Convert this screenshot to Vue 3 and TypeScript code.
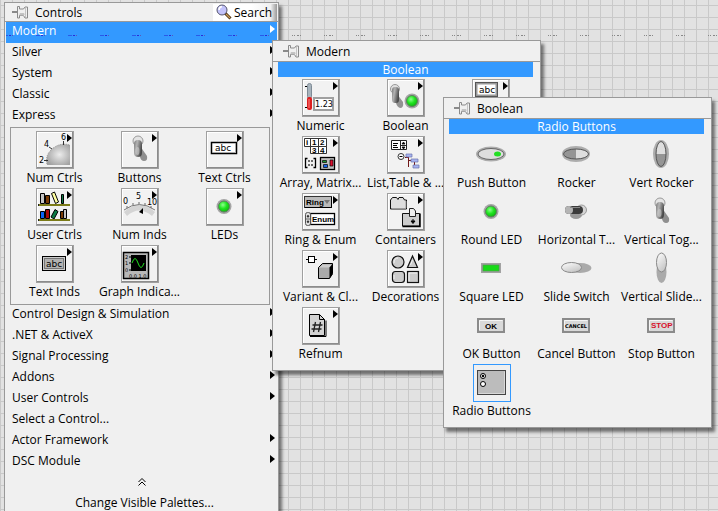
<script setup lang="ts">
import { ref } from 'vue'

interface Item {
  label: string
  icon: string
}
interface Category {
  label: string
  submenu: boolean
}
interface Glyph {
  x: number
  y: number
  text: string
  kind: string
}

const upper: Category[] = ['Modern', 'Silver', 'System', 'Classic', 'Express'].map((label) => ({ label, submenu: true }))

const lower: Category[] = [
  { label: 'Control Design & Simulation', submenu: true },
  { label: '.NET & ActiveX', submenu: true },
  { label: 'Signal Processing', submenu: true },
  { label: 'Addons', submenu: true },
  { label: 'User Controls', submenu: true },
  { label: 'Select a Control...', submenu: false },
  { label: 'Actor Framework', submenu: true },
  { label: 'DSC Module', submenu: true },
]

const express: Item[] = [
  { label: 'Num Ctrls', icon: 'knob' },
  { label: 'Buttons', icon: 'toggle' },
  { label: 'Text Ctrls', icon: 'text-ctrl' },
  { label: 'User Ctrls', icon: 'books' },
  { label: 'Num Inds', icon: 'meter' },
  { label: 'LEDs', icon: 'led' },
  { label: 'Text Inds', icon: 'text-ind' },
  { label: 'Graph Indica...', icon: 'graph' },
]

// Rows of the Modern palette; the last column is filled only in the first row.
const modern: Item[][] = [
  [
    { label: 'Numeric', icon: 'numeric' },
    { label: 'Boolean', icon: 'boolean' },
    { label: '', icon: 'string' },
  ],
  [
    { label: 'Array, Matrix...', icon: 'array' },
    { label: 'List,Table & ...', icon: 'list' },
  ],
  [
    { label: 'Ring & Enum', icon: 'ring' },
    { label: 'Containers', icon: 'containers' },
  ],
  [
    { label: 'Variant & Cl...', icon: 'variant' },
    { label: 'Decorations', icon: 'decorations' },
  ],
  [{ label: 'Refnum', icon: 'refnum' }],
]

const booleans: Item[] = [
  { label: 'Push Button', icon: 'push' },
  { label: 'Rocker', icon: 'rocker' },
  { label: 'Vert Rocker', icon: 'vert-rocker' },
  { label: 'Round LED', icon: 'led' },
  { label: 'Horizontal T...', icon: 'h-toggle' },
  { label: 'Vertical Tog...', icon: 'toggle' },
  { label: 'Square LED', icon: 'square-led' },
  { label: 'Slide Switch', icon: 'slide' },
  { label: 'Vertical Slide...', icon: 'v-slide' },
  { label: 'OK Button', icon: 'ok' },
  { label: 'Cancel Button', icon: 'cancel' },
  { label: 'Stop Button', icon: 'stop' },
  { label: 'Radio Buttons', icon: 'radio' },
]

// Lettering drawn on top of an icon's shape.
const glyphs: Record<string, Glyph[]> = {
  knob: [
    { x: 3, y: 32, text: '2', kind: 'px' },
    { x: 8, y: 16, text: '4', kind: 'px' },
    { x: 25, y: 9, text: '6', kind: 'px' },
  ],
  'text-ctrl': [{ x: 9, y: 20, text: 'abc', kind: 'wide' }],
  'text-ind': [{ x: 10, y: 22, text: 'abc', kind: 'wide' }],
  meter: [
    { x: 2, y: 16, text: '0', kind: 'px' },
    { x: 15, y: 11, text: '5', kind: 'px' },
    { x: 26, y: 17, text: '10', kind: 'px' },
  ],
  graph: [
    { x: 4, y: 14, text: '2', kind: 'tiny' },
    { x: 4, y: 20, text: '1', kind: 'tiny' },
    { x: 4, y: 27, text: '0', kind: 'tiny' },
    { x: 8, y: 33, text: '0.0 1.0', kind: 'tiny' },
  ],
  numeric: [{ x: 13, y: 28, text: '1.23', kind: 'px' }],
  string: [{ x: 7, y: 14, text: 'abc', kind: 'wide' }],
  array: [
    { x: 4, y: 9, text: 'i', kind: 'bold' },
    { x: 10, y: 9, text: '1', kind: 'bold' },
    { x: 18, y: 9, text: '2', kind: 'bold' },
    { x: 10, y: 17, text: '3', kind: 'bold' },
    { x: 18, y: 17, text: '4', kind: 'bold' },
  ],
  ring: [
    { x: 4, y: 12, text: 'Ring', kind: 'bold' },
    { x: 10, y: 29, text: 'Enum', kind: 'bold' },
  ],
  ok: [{ x: 12, y: 22, text: 'OK', kind: 'bold' }],
  cancel: [{ x: 7, y: 21, text: 'CANCEL', kind: 'cap' }],
  stop: [{ x: 8, y: 21, text: 'STOP', kind: 'bold red' }],
}

const openCategory = ref('Modern')
const selected = ref('Radio Buttons')
</script>

<template>
  <main class="desktop">
    <svg class="defs" width="0" height="0" aria-hidden="true">
      <defs>
        <radialGradient id="g-green" cx="0.4" cy="0.35" r="0.7">
          <stop offset="0" stop-color="#8dff8d" />
          <stop offset="0.5" stop-color="#1fe51f" />
          <stop offset="1" stop-color="#0fae0f" />
        </radialGradient>
        <radialGradient id="g-knob" cx="0.55" cy="0.5" r="0.6">
          <stop offset="0" stop-color="#ececec" />
          <stop offset="1" stop-color="#a2a2a2" />
        </radialGradient>
        <linearGradient id="g-stem" x1="0" x2="1" y1="0" y2="0.4">
          <stop offset="0" stop-color="#777" />
          <stop offset="0.4" stop-color="#b4b4b4" />
          <stop offset="1" stop-color="#4a4a4a" />
        </linearGradient>
        <linearGradient id="g-pale" x1="0" x2="0.6" y1="0" y2="1">
          <stop offset="0" stop-color="#fff" />
          <stop offset="1" stop-color="#c6c6c6" />
        </linearGradient>
      </defs>

      <symbol id="i-pin" viewBox="0 0 16 14">
        <path d="M0 7h6" stroke="#8a8a8a" stroke-width="2" fill="none" />
        <path d="M5.5 1.500h2v2.500h4l1.500-2h2.500v11h-2.500l-1.500-2.500h-4v2.500h-2z" fill="#f0f0f0" stroke="#8a8a8a" />
        <path d="M8 8.500h4v1.500h-4zM13.500 3v9" fill="#bbb" stroke="#c4c4c4" />
      </symbol>
      <symbol id="i-search" viewBox="0 0 16 16">
        <path d="M9 9l5.500 5.500" stroke="#4a2f12" stroke-width="3" />
        <path d="M10 10l4 4" stroke="#c99a56" stroke-width="1.300" />
        <circle cx="6" cy="6" r="5" fill="#c3c3fb" stroke="#54546a" />
        <path d="M3 6q0-3 3-3.500" stroke="#fff" stroke-width="1.500" fill="none" />
      </symbol>
      <symbol id="i-knob" viewBox="0 0 38 38">
        <path d="M34 14v20H11q-2-9 4-15q8-8 19-5z" fill="url(#g-knob)" />
        <path d="M11 33q-2-8 4-14q8-8 19-5" fill="none" stroke="#8d8d8d" stroke-dasharray="1 1" />
        <path d="M8 29.500h4M13 16l3 2M27.500 10v4" stroke="#333" />
      </symbol>
      <symbol id="i-toggle" viewBox="0 0 38 38">
        <path d="M19 15l7 10q1 5-3 5q-3 0-4-4z" fill="#8f8f8f" />
        <circle cx="17" cy="10" r="5" fill="#e4e4e4" stroke="#9a9a9a" />
        <rect x="13" y="9" width="8" height="17" rx="4" fill="url(#g-stem)" />
        <ellipse cx="16.500" cy="20" rx="2" ry="4" fill="#cfcfcf" opacity=".6" />
      </symbol>
      <symbol id="i-text-ctrl" viewBox="0 0 38 38">
        <rect x="5.500" y="11.500" width="25" height="11" fill="#fff" stroke="#000" stroke-width="1.500" />
        <path d="M7 21.500h22M29.500 13v9" stroke="#aaa" />
      </symbol>
      <symbol id="i-text-ind" viewBox="0 0 38 38">
        <rect x="6.500" y="11.500" width="23" height="14" fill="#ccc" stroke="#000" />
        <rect x="8.500" y="13.500" width="19" height="10" fill="#b2b2b2" stroke="#777" />
      </symbol>
      <symbol id="i-books" viewBox="0 0 38 38">
        <g stroke="#000">
          <path d="M4.500 5.500h4v10h-4z" fill="#c4c4c4" />
          <path d="M9.500 7.500h4v8h-4z" fill="#7a3c05" />
          <path d="M15.500 5.500l3-1.500 4 10-3 1.500z" fill="#ffffa0" />
          <path d="M25.500 6.500h2v9h-2z" fill="#0c7a44" />
          <path d="M4.500 23.500h4v7h-4z" fill="#0a62f5" />
          <path d="M9.500 21.500h4v9h-4z" fill="#a80808" />
          <path d="M19 21.500l3 2-4 7.500-3-2z" fill="#0c7a44" />
          <path d="M24.500 23.500h3v7h-3z" fill="#7a3c05" />
          <path d="M27.500 21.500h3v9h-3z" fill="#c4c4c4" />
        </g>
        <path d="M2 16h32v2H2zM2 31h32v2H2z" fill="#222" />
        <path d="M3 17h31M3 32h31" stroke="#9a9a16" stroke-width="1.500" />
      </symbol>
      <symbol id="i-meter" viewBox="0 0 38 38">
        <path d="M3 24Q18 10 34 24L31 28Q18 17 6 28z" fill="#d4d4d4" />
        <path d="M3 22Q18 11 34 22" fill="none" stroke="#777" />
        <path d="M6 18v2M12 15v2M18 14v2M24 15v2M30 18v2" stroke="#666" />
        <path d="M22 20v6l-4-2z" fill="#000" />
      </symbol>
      <symbol id="i-led" viewBox="0 0 38 38">
        <circle cx="18" cy="18.500" r="7.500" fill="#a4a4a4" />
        <circle cx="18" cy="18.500" r="5.500" fill="url(#g-green)" stroke="#5f7f5f" />
      </symbol>
      <symbol id="i-graph" viewBox="0 0 38 38">
        <rect x="2.500" y="7.500" width="25" height="26" fill="#b8b8b8" stroke="#000" stroke-width="1.500" />
        <rect x="10" y="10" width="15" height="16" fill="#000" />
        <path d="M11 18q3-9 6 0t6 0" fill="none" stroke="#20e020" />
        <path d="M8 12h2M8 18h2M8 25h2" stroke="#000" />
      </symbol>
      <symbol id="i-numeric" viewBox="0 0 38 38">
        <path d="M3 7.500h3M3 28.500h3" stroke="#000" />
        <rect x="5.500" y="4.500" width="4" height="15" rx="2" fill="#a8b4bd" stroke="#7f8b96" />
        <rect x="5" y="18" width="5" height="13" rx="2" fill="#dc2020" />
        <path d="M7 20v9" stroke="#ff8585" />
        <rect x="12" y="19" width="19" height="12" fill="#fff" stroke="#a0a0a0" stroke-width="2" />
      </symbol>
      <symbol id="i-boolean" viewBox="0 0 38 38">
        <path d="M10 15l6 8q1 6-3 6q-3-1-4-5z" fill="#929292" />
        <circle cx="8" cy="10" r="4.500" fill="#e1e1e1" stroke="#999" />
        <rect x="5" y="8" width="7" height="16" rx="3" fill="url(#g-stem)" />
        <circle cx="25" cy="22" r="7.500" fill="#a4a4a4" />
        <circle cx="25" cy="22" r="5.500" fill="url(#g-green)" stroke="#5f7f5f" />
      </symbol>
      <symbol id="i-string" viewBox="0 0 38 38">
        <rect x="4.500" y="4.500" width="20" height="12" fill="#fff" stroke="#999" stroke-width="2" />
        <rect x="3.500" y="3.500" width="22" height="14" fill="none" stroke="#555" />
      </symbol>
      <symbol id="i-array" viewBox="0 0 38 38">
        <path d="M2.500 2.500h22v8h-22zM8.500 10.500h16v7h-16zM8.500 2.500v8M16.500 2.500v15" fill="#fff" stroke="#333" />
        <path d="M5.500 22.500h-2v9h2M11.500 22.500h2v9h-2" fill="none" stroke="#000" stroke-width="1.300" />
        <path d="M6 24l2 2m0-2l-2 2m3-2l2 2m0-2l-2 2M6 28l2 2m0-2l-2 2m3-2l2 2m0-2l-2 2" stroke="#333" stroke-width=".7" />
        <rect x="18.500" y="21.500" width="14" height="12" fill="#c0c0c0" stroke="#000" stroke-width="1.300" />
        <path d="M20.500 24.500h4v2h-4z" fill="#1c9632" stroke="#000" stroke-width=".7" />
        <path d="M28 24h3v6h-3z" fill="#e01030" stroke="#000" stroke-width=".7" />
        <path d="M21.500 28.500h4v3h-4z" fill="#1664e8" stroke="#000" stroke-width=".7" />
      </symbol>
      <symbol id="i-list" viewBox="0 0 38 38">
        <path d="M4.500 4.500h15v9h-15zM13.500 4.500v9M13.500 9.500h6" fill="#fff" stroke="#222" />
        <path d="M6 7.500h5M6 9.500h4M6 11.500h5" stroke="#000" />
        <path d="M15 8l1.500-2 1.500 2zM15 11l1.500 2 1.500-2z" stroke="#000" stroke-width=".8" />
        <circle cx="14" cy="20.500" r="3" fill="#fff" stroke="#333" />
        <path d="M12.500 20.500h3" stroke="#000" />
        <path d="M18 21.500h4M21.500 22v9M21.500 24.500h4M27.500 26v5" fill="none" stroke="#701818" />
        <path d="M19 18h6v3h-6zM24 23h7v3h-7zM26 29h6v3h-6z" fill="#a7b3ef" stroke="#6a72ad" stroke-width=".7" />
      </symbol>
      <symbol id="i-ring" viewBox="0 0 38 38">
        <rect x="2.500" y="3.500" width="27" height="11" fill="#bbb" stroke="#333" />
        <path d="M3 14.500h26.500V4" fill="none" stroke="#000" />
        <path d="M22 7h6l-3 4z" fill="#777" />
        <rect x="8.500" y="20.500" width="24" height="11" fill="#fff" stroke="#000" stroke-width="1.300" />
        <rect x="3.500" y="19.500" width="5" height="13" rx="2" fill="#ddd" stroke="#555" />
        <path d="M4 26h4M5 24l1-2 1 2zM5 28l1 2 1-2z" stroke="#333" stroke-width=".7" />
      </symbol>
      <symbol id="i-containers" viewBox="0 0 38 38">
        <path d="M3.500 7l2-2.500h4l1.500 2 1-2h4l1.500 2.500h2v9h-16z" fill="#ddd" stroke="#111" />
        <path d="M5 15.500h14M19 8v7" stroke="#999" />
        <path d="M15.500 20.500h17v12.500h-17z" fill="#cdcdcd" stroke="#111" />
        <path d="M15.500 33.500h17.500v-13" stroke="#000" stroke-width="1.500" fill="none" />
        <path d="M22.500 23.500v-8h4l2 2.500v5.500z" fill="#eee" stroke="#222" />
        <path d="M24 28h4l-2 2.500zM26 26v3" fill="#000" stroke="#000" />
      </symbol>
      <symbol id="i-variant" viewBox="0 0 38 38">
        <path d="M4 9.500h11" stroke="#000" />
        <rect x="6.500" y="6.500" width="6" height="6" fill="#fff" stroke="#000" />
        <path d="M16.500 17.500l4-4h10v10l-3 5h-11z" fill="#aaa" stroke="#000" />
        <path d="M27.500 17.500l3-4v11l-3 4z" fill="#000" />
        <path d="M17 17.500h10l3-3h-9z" fill="#ccc" />
      </symbol>
      <symbol id="i-decorations" viewBox="0 0 38 38">
        <g fill="#ccc" stroke="#111" stroke-width="1.200">
          <circle cx="11" cy="12" r="6" />
          <path d="M25.500 6l5 11.500h-10z" />
          <rect x="5.500" y="21.500" width="12" height="11" rx="3" />
          <rect x="20.500" y="21.500" width="11" height="11" />
        </g>
        <path d="M7 13q0-5 4-5M23.500 15l2-5M7 25v4M22 31v-8h8" stroke="#f4f4f4" fill="none" />
      </symbol>
      <symbol id="i-refnum" viewBox="0 0 38 38">
        <path d="M7.500 7.500h10l5 5v16h-15z" fill="#d3d3d3" stroke="#000" />
        <path d="M8 29.500h16v-16M17.500 7.500v5h5" fill="none" stroke="#000" />
        <path d="M13.500 15l-2 10M18.500 15l-2 10M10.500 18h10M9.500 22h10" stroke="#222" stroke-width="1.300" />
      </symbol>
      <symbol id="i-push" viewBox="0 0 38 38">
        <ellipse cx="18" cy="18" rx="15" ry="7.500" fill="#acacac" />
        <ellipse cx="18" cy="18" rx="13" ry="5.500" fill="#dedede" stroke="#666" />
        <ellipse cx="24.500" cy="18" rx="3.500" ry="2.500" fill="#24df24" />
      </symbol>
      <symbol id="i-rocker" viewBox="0 0 38 38">
        <ellipse cx="18" cy="18" rx="14" ry="8" fill="#adadad" />
        <ellipse cx="18" cy="18" rx="12.500" ry="5" fill="#dedede" />
        <path d="M18 13v10q-12 0-12.500-5 .5-5 12.500-5" fill="#959595" />
        <ellipse cx="18" cy="18" rx="12.500" ry="5" fill="none" stroke="#555" />
      </symbol>
      <symbol id="i-vert-rocker" viewBox="0 0 38 38">
        <ellipse cx="18" cy="18" rx="8" ry="14" fill="#adadad" />
        <ellipse cx="18" cy="18" rx="5" ry="12.500" fill="#dedede" />
        <path d="M13 18h10q0 12-5 12.500-5-.5-5-12.500" fill="#959595" />
        <ellipse cx="18" cy="18" rx="5" ry="12.500" fill="none" stroke="#555" />
      </symbol>
      <symbol id="i-h-toggle" viewBox="0 0 38 38">
        <ellipse cx="18" cy="22" rx="6" ry="4" fill="#999" />
        <circle cx="23.500" cy="17" r="5" fill="#d5d5d5" stroke="#999" />
        <rect x="7" y="13" width="18" height="8" rx="4" fill="#3b3b3b" />
        <ellipse cx="11" cy="17" rx="4" ry="4" fill="#b5b5b5" />
        <path d="M12 14.500h10" stroke="#888" />
      </symbol>
      <symbol id="i-square-led" viewBox="0 0 38 38">
        <rect x="8" y="13" width="20" height="10" fill="#a2a2a2" />
        <rect x="10" y="15" width="16" height="6" fill="#18db18" stroke="#4d9a4d" stroke-width=".7" />
      </symbol>
      <symbol id="i-slide" viewBox="0 0 38 38">
        <ellipse cx="22" cy="18" rx="11.500" ry="5" fill="#aaa" />
        <ellipse cx="13.500" cy="17.500" rx="10" ry="5" fill="url(#g-pale)" stroke="#888" />
      </symbol>
      <symbol id="i-v-slide" viewBox="0 0 38 38">
        <ellipse cx="18.500" cy="22" rx="5" ry="11" fill="#aaa" />
        <ellipse cx="18.500" cy="12.500" rx="5" ry="9.500" fill="url(#g-pale)" stroke="#888" />
      </symbol>
      <symbol id="i-plate" viewBox="0 0 38 38">
        <rect x="5" y="12" width="26" height="13" fill="#d9d9d9" stroke="#8b8b8b" stroke-width="2" />
        <path d="M6.500 23v-9.500h23" fill="none" stroke="#f5f5f5" />
      </symbol>
      <symbol id="i-ok" viewBox="0 0 38 38"><use href="#i-plate" width="38" height="38" /></symbol>
      <symbol id="i-cancel" viewBox="0 0 38 38"><use href="#i-plate" width="38" height="38" /></symbol>
      <symbol id="i-stop" viewBox="0 0 38 38"><use href="#i-plate" width="38" height="38" /></symbol>
      <symbol id="i-radio" viewBox="0 0 38 38">
        <rect x="4.500" y="6.500" width="28" height="24" fill="#bcbcbc" stroke="#444" />
        <path d="M5.500 29.500h26v-22" stroke="#d8d8d8" fill="none" />
        <circle cx="10" cy="12" r="2.500" fill="#fff" stroke="#000" />
        <circle cx="10" cy="12" r="1.200" />
        <circle cx="10" cy="20" r="2.500" fill="#fff" stroke="#000" />
      </symbol>
    </svg>

    <nav class="panel root" aria-label="Controls">
      <header class="head">
        <button class="pin" type="button"><svg><use href="#i-pin" /></svg></button>
        <h1>Controls</h1>
        <button class="search" type="button"><svg><use href="#i-search" /></svg>Search</button>
      </header>
      <button
        v-for="c in upper"
        :key="c.label"
        type="button"
        class="row"
        :class="{ open: c.label === openCategory, sub: c.submenu }"
        @click="openCategory = c.label"
      >{{ c.label }}</button>
      <div class="grid framed">
        <button v-for="i in express" :key="i.label" type="button" class="cell">
          <span class="tile raised">
            <svg>
              <use :href="'#i-' + i.icon" />
              <text v-for="(g, k) in glyphs[i.icon]" :key="k" :x="g.x" :y="g.y" :class="g.kind">{{ g.text }}</text>
            </svg>
          </span>
          <span class="name">{{ i.label }}</span>
        </button>
      </div>
      <button
        v-for="c in lower"
        :key="c.label"
        type="button"
        class="row"
        :class="{ open: c.label === openCategory, sub: c.submenu }"
        @click="openCategory = c.label"
      >{{ c.label }}</button>
      <button type="button" class="collapse">
        <svg viewBox="0 0 8 8"><path d="M.5 4L4 .5 7.500 4M.5 7.500L4 4l3.500 3.500" fill="none" stroke="#000" /></svg>
      </button>
      <button type="button" class="change">Change Visible Palettes...</button>
    </nav>

    <section class="panel modern" aria-label="Modern">
      <header class="head">
        <button class="pin" type="button"><svg><use href="#i-pin" /></svg></button>
        <h2>Modern</h2>
      </header>
      <div class="title">Boolean</div>
      <div v-for="(row, n) in modern" :key="n" class="grid">
        <button v-for="i in row" :key="i.icon" type="button" class="cell">
          <span class="tile raised">
            <svg>
              <use :href="'#i-' + i.icon" />
              <text v-for="(g, k) in glyphs[i.icon]" :key="k" :x="g.x" :y="g.y" :class="g.kind">{{ g.text }}</text>
            </svg>
          </span>
          <span class="name">{{ i.label }}</span>
        </button>
      </div>
    </section>

    <section class="panel boolean" aria-label="Boolean">
      <header class="head">
        <button class="pin" type="button"><svg><use href="#i-pin" /></svg></button>
        <h2>Boolean</h2>
      </header>
      <div class="title">{{ selected }}</div>
      <div class="grid">
        <button v-for="i in booleans" :key="i.label" type="button" class="cell" @click="selected = i.label">
          <span class="tile" :class="{ selected: i.label === selected }">
            <svg>
              <use :href="'#i-' + i.icon" />
              <text v-for="(g, k) in glyphs[i.icon]" :key="k" :x="g.x" :y="g.y" :class="g.kind">{{ g.text }}</text>
            </svg>
          </span>
          <span class="name">{{ i.label }}</span>
        </button>
      </div>
    </section>
  </main>
</template>

<style>
body {
  margin: 0;
}
</style>

<style scoped>
.desktop {
  position: relative;
  box-sizing: border-box;
  height: 100vh;
  padding: 2px 4px 0;
  overflow: hidden;
  background-color: #e2e2e2;
  background-image:
    repeating-linear-gradient(90deg, transparent 0 4px, #888 4px 5px, transparent 5px 6px, #888 6px 7px, transparent 7px 9px, #888 9px 11px, transparent 11px 12px, #888 12px 13px, transparent 13px 32px),
    linear-gradient(90deg, #c9c9c9 1px, transparent 1px),
    linear-gradient(#c9c9c9 1px, transparent 1px);
  background-size: 100% 1px, 12px 12px, 12px 12px;
  background-position: 0 35px, 0 5px, 0 5px;
  background-repeat: no-repeat, repeat, repeat;
  font: 12px/17px "Open Sans", "Noto Sans", sans-serif;
  color: #000;
}
.defs {
  position: absolute;
}
button {
  margin: 0;
  padding: 0;
  border: 0;
  background: none;
  font: inherit;
  color: inherit;
}
.panel {
  box-sizing: border-box;
  border: 1px solid #999;
  background: #f0f0f0;
  box-shadow: 3px 4px 3px rgba(0, 0, 0, 0.5);
}
.root {
  width: 275px;
  min-height: 100%;
}
.modern,
.boolean {
  position: absolute;
  width: 269px;
  padding-bottom: 6px;
}
.modern {
  left: 272px;
  top: 40px;
}
.boolean {
  left: 443px;
  top: 97px;
}
.head {
  display: flex;
  align-items: center;
  box-sizing: border-box;
  height: 21px;
  padding-left: 10px;
  gap: 7px;
  border-bottom: 1px solid #999;
}
.root .head {
  height: 19px;
  padding-left: 7px;
}
h1,
h2 {
  margin: 0;
  font-size: 12px;
  font-weight: 400;
}
.pin,
.pin svg {
  display: block;
  width: 16px;
  height: 14px;
}
.search {
  display: flex;
  align-items: center;
  gap: 2px;
  height: 17px;
  margin-left: auto;
  margin-right: 1px;
  padding: 0 5px 0 3px;
  background: linear-gradient(90deg, #fff 60%, #f0f0f0 90%, #999);
}
.search svg {
  width: 16px;
  height: 16px;
}
.row {
  position: relative;
  display: block;
  width: calc(100% - 2px);
  height: 21px;
  margin-left: 1px;
  padding: 0 0 4px 6px;
  text-align: left;
}
.open {
  background: #3399ff;
  color: #fff;
}
.open::before {
  content: "";
  position: absolute;
  left: 0;
  right: 0;
  bottom: 7px;
  height: 1px;
  background: repeating-linear-gradient(90deg, #2a5ae8 0 2px, transparent 2px 3px, #2a2ad8 3px 5px, transparent 5px 6px, #5a5ab8 6px 7px, transparent 7px 30px, #2a5ae8 30px 32px);
}
.sub::after,
.raised::after {
  content: "";
  position: absolute;
  border: 4px solid transparent;
  border-left: 5px solid #000;
  border-right: 0;
}
.sub::after {
  right: 2px;
  top: 3px;
}
.open::after {
  border-left-color: #fff;
}
.raised::after {
  right: 1px;
  top: 2px;
}
.grid {
  display: grid;
  grid-template-columns: repeat(3, 85px);
  grid-auto-rows: 57px;
  margin-left: 5px;
}
.framed {
  box-sizing: border-box;
  width: 260px;
  height: 178px;
  padding: 3px 1px;
  border: 1px solid #999;
}
.cell {
  display: flex;
  flex-direction: column;
  align-items: center;
}
.tile {
  position: relative;
  box-sizing: border-box;
  width: 38px;
  height: 38px;
}
.raised {
  border: 1px solid #a0a0a0;
  box-shadow: inset -1px -1px #8c8c8c, inset 1px 1px #fff;
  background: #f2f2f2;
}
.selected {
  border: 1px solid #3399ff;
}
.tile svg {
  display: block;
  width: 38px;
  height: 38px;
}
.raised svg,
.selected svg {
  margin: -1px;
}
.name {
  height: 19px;
  line-height: 18px;
  white-space: nowrap;
}
.title {
  height: 15px;
  margin: 0 7px 2px 5px;
  background: #3399ff;
  color: #fff;
  line-height: 15px;
  text-align: center;
}
.collapse {
  display: block;
  margin: 5px auto 8px;
}
.collapse svg {
  display: block;
  width: 8px;
  height: 8px;
}
.change {
  display: block;
  margin: 0 auto;
  padding-left: 6px;
}
.px {
  font: 8px "DejaVu Sans", sans-serif;
}
.wide {
  font: 9px "DejaVu Sans", sans-serif;
}
.tiny {
  font: 5px "DejaVu Sans", sans-serif;
}
.bold {
  font: bold 8px "Liberation Sans", sans-serif;
}
.cap {
  font: bold 6px "DejaVu Sans", sans-serif;
  font-size: 5px;
}
.red {
  fill: #d8102a;
}
</style>
